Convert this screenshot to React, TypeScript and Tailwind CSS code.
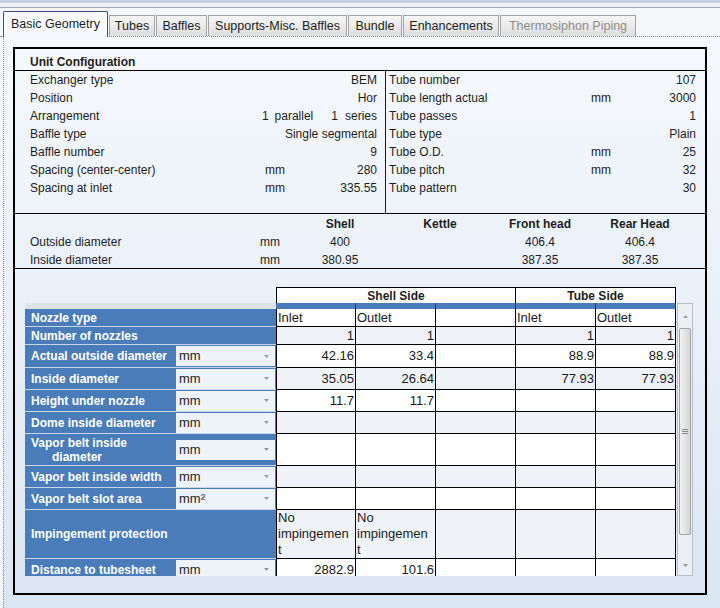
import React from "react";

type Cell = string | string[];

interface NozzleRow {
  label: string | string[];
  unit?: string;
  h: string;
  cells: Cell[];
}

const tabs = [
  { name: "Basic Geometry", w: "w-[105px]", active: true },
  { name: "Tubes", w: "w-[46px]" },
  { name: "Baffles", w: "w-[51px]" },
  { name: "Supports-Misc. Baffles", w: "w-[139px]" },
  { name: "Bundle", w: "w-[54px]" },
  { name: "Enhancements", w: "w-[96px]" },
  { name: "Thermosiphon Piping", w: "w-[136px]", disabled: true },
];

const leftConfig = [
  { label: "Exchanger type", value: "BEM" },
  { label: "Position", value: "Hor" },
  { label: "Arrangement", value: "arr" },
  { label: "Baffle type", value: "Single segmental" },
  { label: "Baffle number", value: "9" },
  { label: "Spacing (center-center)", unit: "mm", value: "280" },
  { label: "Spacing at inlet", unit: "mm", value: "335.55" },
];

const rightConfig = [
  { label: "Tube number", value: "107" },
  { label: "Tube length actual", unit: "mm", value: "3000" },
  { label: "Tube passes", value: "1" },
  { label: "Tube type", value: "Plain" },
  { label: "Tube O.D.", unit: "mm", value: "25" },
  { label: "Tube pitch", unit: "mm", value: "32" },
  { label: "Tube pattern", value: "30" },
];

const shellRows = [
  { label: "Outside diameter", unit: "mm", vals: ["400", "", "406.4", "406.4"] },
  { label: "Inside diameter", unit: "mm", vals: ["380.95", "", "387.35", "387.35"] },
];

const nozzleRows: NozzleRow[] = [
  { label: "Nozzle type", h: "h-[18px]", cells: ["Inlet", "Outlet", "", "Inlet", "Outlet"] },
  { label: "Number of nozzles", h: "h-[18px]", cells: ["1", "1", "", "1", "1"] },
  { label: "Actual outside diameter", unit: "mm", h: "h-[23px]", cells: ["42.16", "33.4", "", "88.9", "88.9"] },
  { label: "Inside diameter", unit: "mm", h: "h-[22px]", cells: ["35.05", "26.64", "", "77.93", "77.93"] },
  { label: "Height under nozzle", unit: "mm", h: "h-[22px]", cells: ["11.7", "11.7", "", "", ""] },
  { label: "Dome inside diameter", unit: "mm", h: "h-[22px]", cells: ["", "", "", "", ""] },
  { label: ["Vapor belt inside", "diameter"], unit: "mm", h: "h-[32px]", cells: ["", "", "", "", ""] },
  { label: "Vapor belt inside width", unit: "mm", h: "h-[22px]", cells: ["", "", "", "", ""] },
  { label: "Vapor belt slot area", unit: "mm²", h: "h-[22px]", cells: ["", "", "", "", ""] },
  {
    label: "Impingement protection",
    h: "h-[49px]",
    cells: [["No", "impingemen", "t"], ["No", "impingemen", "t"], "", "", ""],
  },
  { label: "Distance to tubesheet", unit: "mm", h: "h-[22px]", cells: ["2882.9", "101.6", "", "", ""] },
];

function Arrow() {
  return (
    <svg width="5" height="3" viewBox="0 0 5 3">
      <path d="M0 0h5L2.5 3z" fill="#9a9a9a" />
    </svg>
  );
}

function UnitBox({ unit }: { unit: string }) {
  return (
    <div className="flex h-[20px] w-[99px] items-center justify-between bg-[#eef3fa] pl-[3px] pr-[6px] text-[13px] text-[#222]">
      <span>{unit}</span>
      <Arrow />
    </div>
  );
}

function NozzleGrid() {
  return (
    <div className="flex flex-col">
      {/* side headers */}
      <div className="flex h-[16px]">
        <div className="w-[251px]" />
        <div className="flex w-[240px] items-center justify-center border border-b-0 border-black bg-white text-[12px] font-bold">
          Shell Side
        </div>
        <div className="flex w-[160px] items-center justify-center border border-b-0 border-l-0 border-black bg-white text-[12px] font-bold">
          Tube Side
        </div>
      </div>
      {/* body */}
      <div className="flex h-[273px] overflow-hidden">
        <div className="flex w-[651px] flex-col">
          <div className="flex h-[6px] shrink-0">
            <div className="w-[251px] bg-[#dfe4eb]" />
            {[0, 1, 2, 3, 4].map((i) => (
              <div key={i} className="w-[80px] border-r border-[#2a3f5f] bg-[#4a7cba]" />
            ))}
          </div>
          {nozzleRows.map((row, ri) => {
            const alt = ri % 2 === 1 ? "bg-[#eff3f8]" : "bg-white";
            return (
              <div key={ri} className={`flex shrink-0 ${row.h}`}>
                <div className="flex w-[251px] border-b border-[#c7d5e8] bg-[#4a7cba]">
                  <div
                    className={`flex items-center pl-[6px] text-[12px] font-bold leading-[14px] text-white ${
                      row.unit ? "w-[151px]" : "w-[251px]"
                    }`}
                  >
                    {Array.isArray(row.label) ? (
                      <div className="flex flex-col">
                        <span>{row.label[0]}</span>
                        <span className="pl-[21px]">{row.label[1]}</span>
                      </div>
                    ) : (
                      row.label
                    )}
                  </div>
                  {row.unit && (
                    <div className="flex w-[100px] items-center">
                      <UnitBox unit={row.unit} />
                    </div>
                  )}
                </div>
                {row.cells.map((c, ci) => {
                  const isText = Array.isArray(c) || /[A-Za-z]/.test(c as string);
                  return (
                    <div
                      key={ci}
                      className={`w-[80px] border-b border-r border-black text-[13px] leading-[16px] text-[#1a1a1a] ${alt} ${
                        ci === 0 ? "border-l" : ""
                      } ${
                        Array.isArray(c)
                          ? "flex flex-col pl-[1px]"
                          : isText
                          ? "flex items-center pl-[1px]"
                          : "flex items-center justify-end pr-[1px]"
                      }`}
                    >
                      {Array.isArray(c) ? c.map((t, ti) => <span key={ti}>{t}</span>) : c}
                    </div>
                  );
                })}
              </div>
            );
          })}
        </div>
        {/* scrollbar */}
        <div className="ml-[1px] flex w-[16px] flex-col border border-[#b6bec9] bg-[#eceff3]">
          <div className="flex h-[24px] items-center justify-center">
            <svg width="5" height="3" viewBox="0 0 5 3">
              <path d="M0 3h5L2.5 0z" fill="#a0a0a0" />
            </svg>
          </div>
          <div className="mx-[1px] flex h-[207px] items-center justify-center rounded-[2px] border border-[#9fa4aa] bg-gradient-to-r from-[#f2f2f2] to-[#d6d6d6]">
            <div className="flex flex-col gap-[1px]">
              <div className="h-px w-[6px] bg-[#8a8a8a]" />
              <div className="h-px w-[6px] bg-[#8a8a8a]" />
              <div className="h-px w-[6px] bg-[#8a8a8a]" />
            </div>
          </div>
          <div className="flex flex-1 items-end justify-center pb-[8px]">
            <Arrow />
          </div>
        </div>
      </div>
    </div>
  );
}

export default function App() {
  return (
    <div className="flex h-[608px] w-[720px] flex-col overflow-hidden bg-[#f4f6f9] font-['Liberation_Sans',Arial,sans-serif] text-[#1e1e1e]">
      {/* window strip */}
      <div className="h-[3px] bg-[#c3d1e3]" />
      <div className="h-[5px] border-b border-[#a3abb6] bg-[#eef2f7]" />

      {/* tabs */}
      <div className="flex h-[29px] shrink-0 items-end gap-[1px] border-b border-dotted border-[#8c8c8c] pl-[3px]">
        {tabs.map((t) =>
          t.active ? (
            <div
              key={t.name}
              className={`relative z-10 -mb-px flex h-[26px] items-center justify-center rounded-t-[2px] border border-b-0 border-[#3e4c78] bg-[#f7f9fc] text-[12.5px] ${t.w}`}
            >
              {t.name}
            </div>
          ) : (
            <div
              key={t.name}
              className={`flex h-[21px] items-center justify-center border border-b-0 border-[#a4a4a4] bg-gradient-to-b from-[#f6f6f6] to-[#dedede] text-[12.5px] ${t.w} ${
                t.disabled ? "text-[#8e8e8e]" : "text-[#1e1e1e]"
              }`}
            >
              {t.name}
            </div>
          )
        )}
      </div>

      {/* panel */}
      <div className="ml-[3px] flex-1 border-l border-dotted border-[#8c8c8c] bg-gradient-to-b from-[#f6f9fd] to-[#dbe6f3] pl-[9px] pt-[10px]">
        <div className="flex h-[548px] w-[694px] flex-col border-2 border-black">
          {/* unit configuration */}
          <div className="h-[22px] shrink-0 border-b border-black pl-[15px] pt-[6px] text-[12px] font-bold leading-[14px]">
            Unit Configuration
          </div>
          <div className="flex h-[143px] shrink-0 border-b border-black text-[12px] leading-[18px]">
            <div className="w-[371px] border-r border-[#1e1e1e] pl-[15px] pr-[8px]">
              {leftConfig.map((r) => (
                <div key={r.label} className="flex h-[18px]">
                  <span className="w-[235px]">{r.label}</span>
                  {r.value === "arr" ? (
                    <div className="flex flex-1 justify-end">
                      <span>1</span>
                      <span className="ml-[6px]">parallel</span>
                      <span className="ml-[18px]">1</span>
                      <span className="ml-[7px]">series</span>
                    </div>
                  ) : (
                    <>
                      <span className="w-[40px]">{r.unit ?? ""}</span>
                      <span className="flex-1 whitespace-nowrap text-right">{r.value}</span>
                    </>
                  )}
                </div>
              ))}
            </div>
            <div className="flex-1 pl-[3px] pr-[9px]">
              {rightConfig.map((r) => (
                <div key={r.label} className="flex h-[18px]">
                  <span className="w-[202px]">{r.label}</span>
                  <span className="w-[40px]">{r.unit ?? ""}</span>
                  <span className="flex-1 text-right">{r.value}</span>
                </div>
              ))}
            </div>
          </div>

          {/* shell / heads */}
          <div className="h-[55px] shrink-0 border-b border-black pl-[15px] pt-[1px] text-[12px] leading-[18px]">
            <div className="flex h-[18px] font-bold">
              <span className="w-[260px]" />
              <span className="w-[100px] text-center">Shell</span>
              <span className="w-[100px] text-center">Kettle</span>
              <span className="w-[100px] text-center">Front head</span>
              <span className="w-[100px] text-center">Rear Head</span>
            </div>
            {shellRows.map((r) => (
              <div key={r.label} className="flex h-[18px]">
                <span className="w-[230px]">{r.label}</span>
                <span className="w-[30px]">{r.unit}</span>
                {r.vals.map((v, i) => (
                  <span key={i} className="w-[100px] text-center">
                    {v}
                  </span>
                ))}
              </div>
            ))}
          </div>

          {/* nozzles */}
          <div className="flex-1 pl-[10px] pt-[18px]">
            <NozzleGrid />
          </div>
        </div>
      </div>
    </div>
  );
}
